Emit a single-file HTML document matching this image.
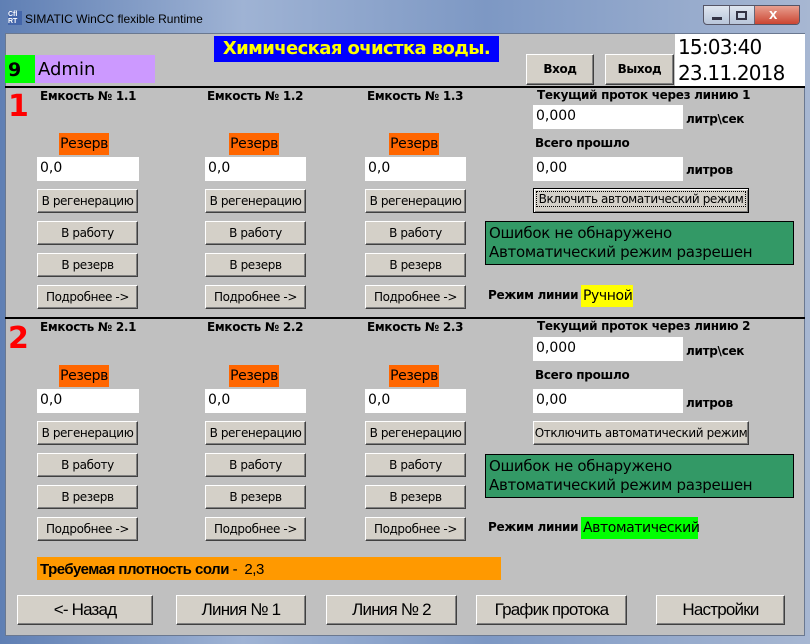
<!DOCTYPE html>
<html><head><meta charset="utf-8">
<style>
*{margin:0;padding:0;box-sizing:border-box}
body{width:810px;height:644px;overflow:hidden;position:relative;background:linear-gradient(90deg,#5f7fb4 0,#9fb3d4 30%,#7d98c4 60%,#a7b7d2 100%);font-family:"Liberation Sans","DejaVu Sans",sans-serif}
.a{position:absolute}
#c{position:absolute;left:5px;top:33px;width:800px;height:603px;background:#c0c0c0;border:1px solid #6a7890}
.lbl{position:absolute;font-weight:bold;font-size:12px;color:#000;font-family:"DejaVu Sans","Liberation Sans",sans-serif;letter-spacing:-0.3px}
.rez{position:absolute;width:50px;height:22px;background:#ff6600;font-size:14px;line-height:22px;text-align:center;font-family:"DejaVu Sans",sans-serif;letter-spacing:-0.4px}
.val{position:absolute;background:#fff;height:24px;font-size:14px;line-height:22px;padding-left:3px;font-family:"DejaVu Sans",sans-serif}
.btn{position:absolute;background:#d4d0c8;border:1px solid;border-color:#fff #404040 #404040 #fff;box-shadow:inset -1px -1px 0 #808080;font-size:12px;text-align:center;font-family:"DejaVu Sans",sans-serif;letter-spacing:-0.4px;white-space:nowrap}
.g{position:absolute;background:#339966;border:1px solid #000;font-size:15px;line-height:19px;padding:2px 3px;font-family:"DejaVu Sans",sans-serif;letter-spacing:-0.3px}
.num{position:absolute;color:#ff0000;font-weight:bold;font-size:30px;font-family:"DejaVu Sans",sans-serif}
.bb{position:absolute;background:#d4d0c8;border:1px solid;border-color:#fff #404040 #404040 #fff;box-shadow:inset -1px -1px 0 #808080;font-size:17px;text-align:center;line-height:27px;font-family:"Liberation Sans",sans-serif;letter-spacing:-0.8px}
</style></head><body>
<div class="a" style="left:8px;top:11px;width:14px;height:14px;background:#4466aa;color:#fff;font-size:7px;line-height:7px;font-weight:bold">Cfl<br>RT</div>
<div class="a" style="left:25px;top:12px;font-size:12px;color:#000">SIMATIC WinCC flexible Runtime</div>
<div class="a" style="left:703px;top:5px;width:97px;height:20px;border:1px solid #556;border-radius:0 0 4px 4px;background:linear-gradient(#dfe6f0,#b9c6da);overflow:hidden">
 <div class="a" style="left:25px;top:0;width:1px;height:20px;background:#667"></div>
 <div class="a" style="left:50px;top:0;width:46px;height:20px;background:linear-gradient(#e8a090,#c83c28);border-left:1px solid #667"></div>
 <div class="a" style="left:8px;top:11px;width:10px;height:3px;background:#334;"></div>
 <div class="a" style="left:32px;top:5px;width:11px;height:9px;border:2px solid #334"></div>
 <div class="a" style="left:65px;top:0px;color:#fff;font-weight:bold;font-size:15px">x</div>
</div>
<div id="c"></div>
<div class="a" style="left:214px;top:36px;width:285px;height:26px;background:#0000ff;color:#ffff00;font-weight:bold;font-size:18px;line-height:26px;text-align:center;font-family:'DejaVu Sans',sans-serif;letter-spacing:-0.6px">Химическая очистка воды.</div>
<div class="a" style="left:5px;top:55px;width:30px;height:28px;background:#00ff00;font-weight:bold;font-size:19px;line-height:30px;padding-left:3px;font-family:'DejaVu Sans',sans-serif">9</div>
<div class="a" style="left:35px;top:55px;width:120px;height:28px;background:#cc99ff;font-size:18px;line-height:30px;padding-left:3px;font-family:'DejaVu Sans',sans-serif">Admin</div>
<div class="btn" style="left:526px;top:54px;width:68px;height:31px;line-height:29px;font-weight:bold;font-size:12px">Вход</div>
<div class="btn" style="left:605px;top:54px;width:69px;height:31px;line-height:29px;font-weight:bold;font-size:12px">Выход</div>
<div class="a" style="left:675px;top:34px;width:130px;height:52px;background:#fff;font-size:20px;line-height:26px;padding-left:3px;font-family:'DejaVu Sans',sans-serif;letter-spacing:-0.8px">15:03:40<br>23.11.2018</div>
<div class="a" style="left:5px;top:86px;width:800px;height:2px;background:#000"></div>
<div class="a" style="left:5px;top:317px;width:800px;height:2px;background:#000"></div>

<!-- Section 1 -->
<div class="num" style="left:8px;top:89px">1</div>
<div class="lbl" style="left:40px;top:89px">Емкость № 1.1</div>
<div class="lbl" style="left:207px;top:89px">Емкость № 1.2</div>
<div class="lbl" style="left:367px;top:89px">Емкость № 1.3</div>
<div class="rez" style="left:59px;top:133px">Резерв</div>
<div class="rez" style="left:229px;top:133px">Резерв</div>
<div class="rez" style="left:389px;top:133px">Резерв</div>
<div class="val" style="left:37px;top:157px;width:102px">0,0</div>
<div class="val" style="left:205px;top:157px;width:101px">0,0</div>
<div class="val" style="left:365px;top:157px;width:101px">0,0</div>
<div class="btn" style="left:37px;top:189px;width:101px;height:24px;line-height:22px">В регенерацию</div>
<div class="btn" style="left:205px;top:189px;width:101px;height:24px;line-height:22px">В регенерацию</div>
<div class="btn" style="left:365px;top:189px;width:101px;height:24px;line-height:22px">В регенерацию</div>
<div class="btn" style="left:37px;top:221px;width:101px;height:24px;line-height:22px">В работу</div>
<div class="btn" style="left:205px;top:221px;width:101px;height:24px;line-height:22px">В работу</div>
<div class="btn" style="left:365px;top:221px;width:101px;height:24px;line-height:22px">В работу</div>
<div class="btn" style="left:37px;top:253px;width:101px;height:24px;line-height:22px">В резерв</div>
<div class="btn" style="left:205px;top:253px;width:101px;height:24px;line-height:22px">В резерв</div>
<div class="btn" style="left:365px;top:253px;width:101px;height:24px;line-height:22px">В резерв</div>
<div class="btn" style="left:37px;top:285px;width:101px;height:24px;line-height:22px">Подробнее -&gt;</div>
<div class="btn" style="left:205px;top:285px;width:101px;height:24px;line-height:22px">Подробнее -&gt;</div>
<div class="btn" style="left:365px;top:285px;width:101px;height:24px;line-height:22px">Подробнее -&gt;</div>
<div class="lbl" style="left:537px;top:88px">Текущий проток через линию 1</div>
<div class="val" style="left:533px;top:105px;width:150px">0,000</div>
<div class="lbl" style="left:686px;top:112px">литр\сек</div>
<div class="lbl" style="left:535px;top:136px">Всего прошло</div>
<div class="val" style="left:533px;top:157px;width:150px">0,00</div>
<div class="lbl" style="left:686px;top:163px">литров</div>
<div class="btn" style="left:533px;top:188px;width:216px;height:25px;line-height:21px;border:1px solid #000;box-shadow:inset 1px 1px 0 #fff,inset -1px -1px 0 #808080"><span style="outline:1px dotted #000;padding:0 2px">Включить автоматический режим</span></div>
<div class="g" style="left:485px;top:221px;width:309px;height:44px">Ошибок не обнаружено<br>Автоматический режим разрешен</div>
<div class="lbl" style="left:488px;top:288px">Режим линии</div>
<div class="a" style="left:581px;top:285px;width:52px;height:22px;background:#ffff00;font-size:14px;line-height:23px;padding-left:2px;font-family:'DejaVu Sans',sans-serif;letter-spacing:-0.4px">Ручной</div>

<!-- Section 2 -->
<div class="num" style="left:8px;top:321px">2</div>
<div class="lbl" style="left:40px;top:320px">Емкость № 2.1</div>
<div class="lbl" style="left:207px;top:320px">Емкость № 2.2</div>
<div class="lbl" style="left:367px;top:320px">Емкость № 2.3</div>
<div class="rez" style="left:59px;top:365px">Резерв</div>
<div class="rez" style="left:229px;top:365px">Резерв</div>
<div class="rez" style="left:389px;top:365px">Резерв</div>
<div class="val" style="left:37px;top:389px;width:102px">0,0</div>
<div class="val" style="left:205px;top:389px;width:101px">0,0</div>
<div class="val" style="left:365px;top:389px;width:101px">0,0</div>
<div class="btn" style="left:37px;top:421px;width:101px;height:24px;line-height:22px">В регенерацию</div>
<div class="btn" style="left:205px;top:421px;width:101px;height:24px;line-height:22px">В регенерацию</div>
<div class="btn" style="left:365px;top:421px;width:101px;height:24px;line-height:22px">В регенерацию</div>
<div class="btn" style="left:37px;top:453px;width:101px;height:24px;line-height:22px">В работу</div>
<div class="btn" style="left:205px;top:453px;width:101px;height:24px;line-height:22px">В работу</div>
<div class="btn" style="left:365px;top:453px;width:101px;height:24px;line-height:22px">В работу</div>
<div class="btn" style="left:37px;top:485px;width:101px;height:24px;line-height:22px">В резерв</div>
<div class="btn" style="left:205px;top:485px;width:101px;height:24px;line-height:22px">В резерв</div>
<div class="btn" style="left:365px;top:485px;width:101px;height:24px;line-height:22px">В резерв</div>
<div class="btn" style="left:37px;top:517px;width:101px;height:24px;line-height:22px">Подробнее -&gt;</div>
<div class="btn" style="left:205px;top:517px;width:101px;height:24px;line-height:22px">Подробнее -&gt;</div>
<div class="btn" style="left:365px;top:517px;width:101px;height:24px;line-height:22px">Подробнее -&gt;</div>
<div class="lbl" style="left:537px;top:319px">Текущий проток через линию 2</div>
<div class="val" style="left:533px;top:337px;width:150px">0,000</div>
<div class="lbl" style="left:686px;top:344px">литр\сек</div>
<div class="lbl" style="left:535px;top:368px">Всего прошло</div>
<div class="val" style="left:533px;top:389px;width:150px">0,00</div>
<div class="lbl" style="left:686px;top:396px">литров</div>
<div class="btn" style="left:533px;top:421px;width:216px;height:24px;line-height:22px">Отключить автоматический режим</div>
<div class="g" style="left:485px;top:454px;width:309px;height:44px">Ошибок не обнаружено<br>Автоматический режим разрешен</div>
<div class="lbl" style="left:488px;top:520px">Режим линии</div>
<div class="a" style="left:581px;top:517px;width:117px;height:22px;background:#00ff00;font-size:14px;line-height:23px;padding-left:2px;font-family:'DejaVu Sans',sans-serif;letter-spacing:-0.4px">Автоматический</div>

<div class="a" style="left:37px;top:557px;width:464px;height:23px;background:#ff9900;font-size:15px;line-height:25px;padding-left:3px;font-family:'Liberation Sans',sans-serif;letter-spacing:-0.5px"><b>Требуемая плотность соли</b> -&nbsp; 2,3</div>

<div class="bb" style="left:17px;top:595px;width:136px;height:30px">&lt;- Назад</div>
<div class="bb" style="left:176px;top:595px;width:130px;height:30px">Линия № 1</div>
<div class="bb" style="left:326px;top:595px;width:131px;height:30px">Линия № 2</div>
<div class="bb" style="left:476px;top:595px;width:151px;height:30px">График протока</div>
<div class="bb" style="left:656px;top:595px;width:129px;height:30px">Настройки</div>
</body></html>
